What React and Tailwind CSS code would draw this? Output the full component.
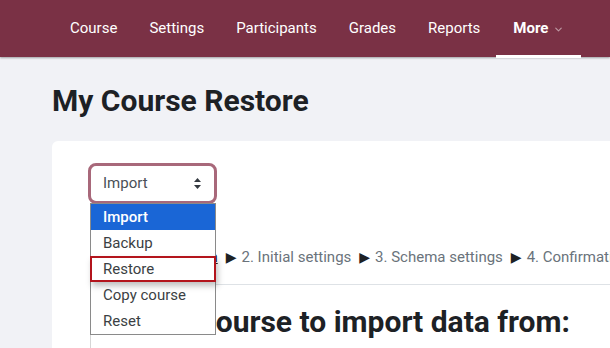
import { ChevronDown } from 'lucide-react'

const navItems = ['Course', 'Settings', 'Participants', 'Grades', 'Reports']
const options = ['Import', 'Backup', 'Restore', 'Copy course', 'Reset']
const steps = ['2. Initial settings', '3. Schema settings', '4. Confirmation', '5. Perform import']

export default function App() {
    return (
        <div className="w-[610px] h-[348px] overflow-hidden bg-[#f1f2f6] font-['Roboto',sans-serif]">
            {/* Secondary navigation */}
            <nav className="h-[57px] bg-[#7a3145] flex items-stretch pl-[54px] shadow-[0_1px_2px_rgba(0,0,0,0.35)] relative z-10">
                {navItems.map((item) => (
                    <div key={item} className="px-4 flex items-center text-[15px] text-white">
                        {item}
                    </div>
                ))}
                <div className="relative px-[17px] flex items-center gap-[5px] text-[15px] font-bold text-white">
                    More
                    <ChevronDown size={11} strokeWidth={2.5} className="text-white/50 mt-[2px]" />
                    <span className="absolute left-0 right-0 bottom-[-1px] h-[3px] bg-white"></span>
                </div>
            </nav>

            <h1 className="pl-[52px] pt-[26px] text-[30px] leading-[36px] font-bold text-[#1d2125]">My Course Restore</h1>

            {/* Content card */}
            <div className="ml-[52px] mt-[22px] h-[300px] bg-white rounded-tl-[6px] pl-[38px] pt-[22px]">
                <div className="relative">
                    <div className="-ml-[2px] w-[129px] h-[41px] rounded-[8px] border-[3px] border-[#a8687a] flex items-center justify-between pl-[12px] pr-[13px] text-[15px] text-[#495057]">
                        Import
                        <svg width="7" height="11" viewBox="0 0 7 11" className="text-[#343a40]">
                            <path d="M3.5 0L7 4H0z M3.5 11L0 7h7z" fill="currentColor" />
                        </svg>
                    </div>

                    {/* Open options list */}
                    <ul className="absolute left-0 top-[40px] w-[126px] bg-white border border-[#8a8a8a] z-20 text-[15px] text-[#3b3f44]">
                        {options.map((opt) => (
                            <li
                                key={opt}
                                className={`relative h-[26px] pl-[12px] flex items-center ${opt === 'Import' ? 'bg-[#1a66d6] text-white font-medium' : ''}`}
                            >
                                {opt}
                                {opt === 'Restore' && (
                                    <span className="absolute -left-px -right-px top-0 bottom-0 border-2 border-[#b3141c] shadow-[2px_4px_6px_rgba(0,0,0,0.25)]"></span>
                                )}
                            </li>
                        ))}
                    </ul>
                    <div className="absolute left-0 top-[171px] w-px h-[20px] bg-[#d6d6d6]"></div>

                    <div className="mt-[42px] flex items-center text-[15px] leading-[22px] text-[#6a737b] whitespace-nowrap">
                        <span className="text-[#1d2125] underline">1. Course selection</span>
                        {steps.map((s) => (
                            <span key={s} className="flex items-center">
                                <span className="ml-[8px] mr-[5px] text-[#1d2125] text-[14px] font-['DejaVu_Sans',sans-serif]">▶</span>
                                {s}
                            </span>
                        ))}
                    </div>

                    <div className="mt-[16px] border-t border-[#dee2e6]"></div>

                    <h2 className="mt-[18px] pl-[21px] text-[30px] leading-[38px] font-bold text-[#1d2125] whitespace-nowrap">
                        Find a course to import data from:
                    </h2>
                </div>
            </div>
        </div>
    )
}
